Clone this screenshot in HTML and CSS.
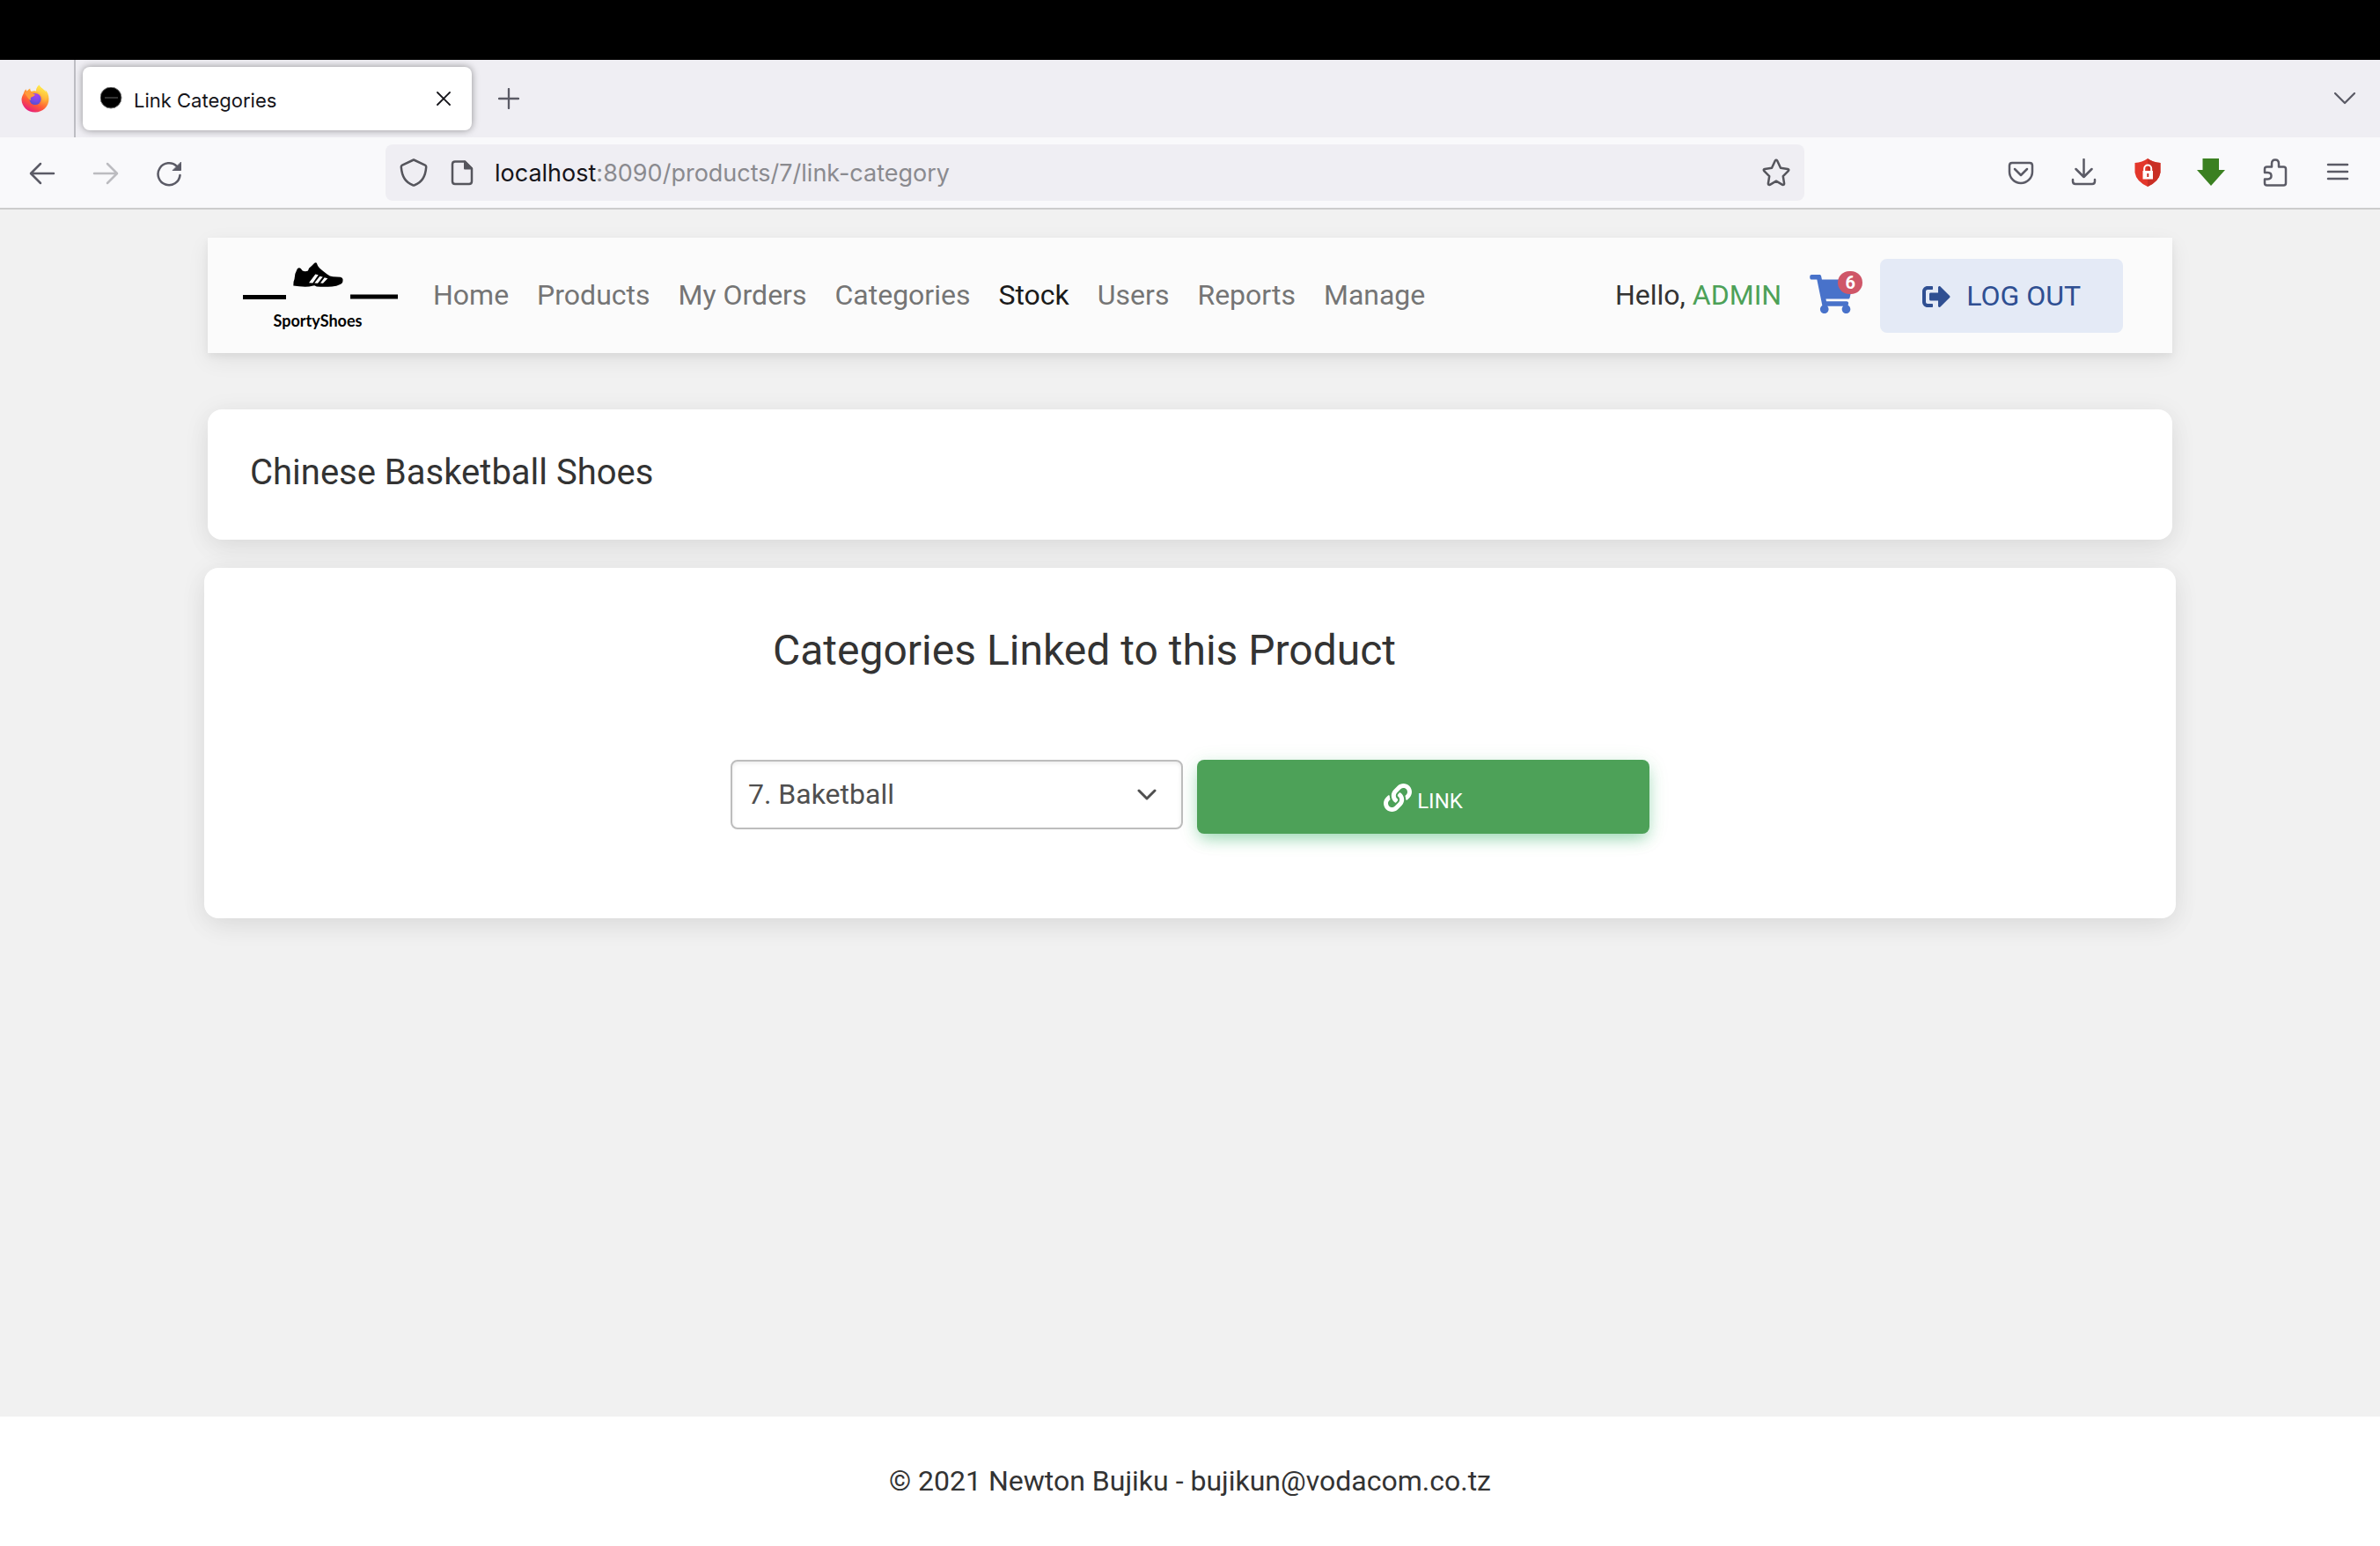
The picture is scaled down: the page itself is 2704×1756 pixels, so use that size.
FILE: index.html
```html
<!DOCTYPE html>
<html lang="en">
<head>
<meta charset="utf-8">
<meta name="viewport" content="width=device-width, initial-scale=1">
<title>Link Categories</title>
<link rel="stylesheet" href="styles.css">
</head>
<body>
<div class="screen-edge"></div>

<header class="browser">
  <div class="tab-strip">
    <button class="pinned" type="button" aria-label="Firefox View">
      <svg width="32" height="32" viewBox="0 0 32 32" aria-hidden="true">
        <defs>
          <linearGradient id="flame" x1="0.8" y1="0.05" x2="0.25" y2="1">
            <stop offset="0" stop-color="#fff44f"/><stop offset="0.35" stop-color="#ffa436"/><stop offset="0.65" stop-color="#ff5b36"/><stop offset="1" stop-color="#e31587"/>
          </linearGradient>
          <linearGradient id="tail" x1="0.6" y1="0" x2="0.4" y2="1">
            <stop offset="0" stop-color="#fff44f"/><stop offset="0.6" stop-color="#ffb339"/><stop offset="1" stop-color="#ff6b36" stop-opacity="0"/>
          </linearGradient>
          <radialGradient id="globe" cx="0.6" cy="0.2" r="0.9">
            <stop offset="0" stop-color="#a541ee"/><stop offset="0.5" stop-color="#7a4be8"/><stop offset="1" stop-color="#4a50c8"/>
          </radialGradient>
        </defs>
        <path fill="url(#flame)" d="M20.500 0.500c-2.500 2-3.500 5-3.200 7.200-2-.8-4-.6-5.500.2-1.200-.8-1.600-2-1.500-3.400-1.400.6-2.600 1.700-3.400 3-.9 0-1.200-1.500-1.200-2.200-1.500 1.200-2.500 3.200-2.900 5C1.500 12.500.5 15.300.5 17.200.8 25.200 7.500 31.500 16 31.500S31.500 25 31.500 16.500c0-4.500-1.600-8.500-4.400-10.400.5 1 .7 1.700.8 2.600C26 5 22 4 20.500.5z"/>
        <path fill="url(#tail)" d="M20.500.5c-2.500 2-3.500 5-3.200 7.200 4.500 1.500 6.700 5.300 6.200 9.300-.4 4-3 7-6.500 8.500 7.500-.5 12.500-5.500 12.500-12 0-3-1-5-1.600-4.800C26 5 22 4 20.500.5z"/>
        <circle cx="16" cy="16.500" r="6.600" fill="url(#globe)"/>
        <path fill="#ff9a3a" d="M3.500 9.500c2-1.500 5-1.800 8-.8 1 .8 1.600 2.400 4.300 2.500-.3 2.300-2.800 2.200-4.300 3.300-1 .8-1 2.200-.2 3.500-3.500-1-4.300-5-7.800-8.500z"/>
      </svg>
    </button>
    <div class="tab">
      <svg class="tab-favicon" width="26" height="26" viewBox="0 0 26 26" aria-hidden="true">
        <circle cx="12" cy="12" r="12" fill="#000" stroke="#777" stroke-width="1"/>
        <path d="M5 12h15" stroke="#333" stroke-width="2"/>
      </svg>
      <span class="tab-title">Link Categories</span>
      <button class="icon-button" type="button" aria-label="Close tab">
        <svg width="16" height="16" viewBox="0 0 16 16" fill="none" stroke="#15141a" stroke-width="1.800" stroke-linecap="round" aria-hidden="true"><path d="M1 1l14 14M15 1L1 15"/></svg>
      </button>
    </div>
    <button class="icon-button new-tab" type="button" aria-label="New tab">
      <svg width="24" height="24" viewBox="0 0 24 24" fill="none" stroke="#5b5b66" stroke-width="2.300" stroke-linecap="round" aria-hidden="true"><path d="M12 1v22M1 12h22"/></svg>
    </button>
    <button class="icon-button all-tabs" type="button" aria-label="List all tabs">
      <svg width="24" height="14" viewBox="0 0 24 14" fill="none" stroke="#5b5b66" stroke-width="2.300" stroke-linecap="round" stroke-linejoin="round" aria-hidden="true"><path d="M1 1l11 11L23 1"/></svg>
    </button>
  </div>

  <div class="toolbar">
    <div class="history">
      <button class="icon-button" type="button" aria-label="Back">
        <svg width="32" height="32" viewBox="0 0 32 32" fill="none" stroke="#5b5b66" stroke-width="2.500" stroke-linecap="round" stroke-linejoin="round" aria-hidden="true"><path d="M29 17H4M14 6L3 17l11 11"/></svg>
      </button>
      <button class="icon-button" type="button" aria-label="Forward" disabled>
        <svg width="32" height="32" viewBox="0 0 32 32" fill="none" stroke="#bcbcc0" stroke-width="2.500" stroke-linecap="round" stroke-linejoin="round" aria-hidden="true"><path d="M3 17h25M18 6l11 11-11 11"/></svg>
      </button>
      <button class="icon-button" type="button" aria-label="Reload">
        <svg width="32" height="32" viewBox="0 0 32 32" fill="none" stroke="#5b5b66" stroke-width="2.500" stroke-linecap="round" aria-hidden="true"><path d="M28.500 19A12.500 12.500 0 1 1 25 9"/><path d="M29.500 4.500v9h-9z" fill="#5b5b66" stroke-width="1" stroke-linejoin="round"/></svg>
      </button>
    </div>
    <div class="address">
      <svg width="32" height="32" viewBox="0 0 32 32" fill="none" stroke="#55555c" stroke-width="2.500" stroke-linejoin="round" aria-hidden="true"><path d="M16 1.500l13 6.200c1 .5 1.300 1 1.200 2C29.500 20 25 27.500 17 30.300q-1 .4-2 0C7 27.500 2.500 20 1.800 9.700c-.1-1 .2-1.500 1.200-2z"/></svg>
      <svg width="26" height="32" viewBox="0 0 26 32" fill="none" stroke="#55555c" stroke-width="2.500" stroke-linejoin="round" aria-hidden="true"><path d="M5 3.500h11l8 8V26q0 3-3 3H5q-3 0-3-3V6.500q0-3 3-3z"/><path d="M16 3.500v8h8z" fill="#55555c" stroke-width="2"/></svg>
      <div class="url" role="textbox" aria-label="Address"><span class="url-host">localhost</span>:8090/products/7/link-category</div>
      <button class="icon-button" type="button" aria-label="Bookmark this page">
        <svg width="32" height="32" viewBox="0 0 32 32" fill="none" stroke="#55555c" stroke-width="2.500" stroke-linejoin="round" aria-hidden="true"><path d="M14.700 2.700q1.300-1.700 2.600 0l3.700 8 8 1.200q2 .5.800 2.200l-6 6.100 1.300 8.200q0 2-2 1.400L16 25.700l-7.100 4.100q-2 .6-2-1.400l1.300-8.200-6-6.100q-1.200-1.700.8-2.200l8-1.200z"/></svg>
      </button>
    </div>
    <div class="actions">
      <button class="icon-button" type="button" aria-label="Save to Pocket">
        <svg width="32" height="32" viewBox="0 0 32 32" fill="none" stroke="#5b5b66" stroke-width="2.500" stroke-linecap="round" stroke-linejoin="round" aria-hidden="true"><path d="M6 5h20q3 0 3 3v7a13 13 0 0 1-26 0V8q0-3 3-3z"/><path d="M9 12l7 7 7-7"/></svg>
      </button>
      <button class="icon-button" type="button" aria-label="Downloads">
        <svg width="32" height="32" viewBox="0 0 32 32" fill="none" stroke="#5b5b66" stroke-width="2.500" stroke-linecap="round" stroke-linejoin="round" aria-hidden="true"><path d="M15.500 1v20M6.500 12l9 9 9-9M3 24v2q0 3 3 3h19q3 0 3-3v-2"/></svg>
      </button>
      <button class="icon-button" type="button" aria-label="Password guard">
        <svg width="32" height="32" viewBox="0 0 32 32" aria-hidden="true">
          <path fill="#e3372b" d="M16 0q6 4.500 14.500 5v11Q29 26 16 32 3 26 1.500 16V5Q10 4.500 16 0z"/><path fill="#c92f25" d="M16 0q6 4.500 14.500 5v11Q29 26 16 32z"/>
          <path fill="#fff" d="M10.500 14h11.500v9.500H10.500z"/><path fill="none" stroke="#fff" stroke-width="2" d="M12.200 14v-2.500a4 4 0 0 1 8 0V14"/><path stroke="#c92f25" stroke-width="2" d="M16.300 17v4"/>
        </svg>
      </button>
      <button class="icon-button" type="button" aria-label="Download helper">
        <svg width="32" height="32" viewBox="0 0 32 32" aria-hidden="true"><path fill="#3b8021" d="M6.500 0H25v13h7L16 31 0 13h6.500z"/></svg>
      </button>
      <button class="icon-button" type="button" aria-label="Extensions">
        <svg width="32" height="32" viewBox="0 0 32 32" fill="none" stroke="#5b5b66" stroke-width="2.500" stroke-linejoin="round" aria-hidden="true"><path d="M5 16v-4q0-2.500 2.500-2.500H13V6q0-4.500 4-4.500T21 6v3.500h5.500Q29 9.500 29 12v16q0 2.500-2.500 2.500h-19Q5 30.500 5 28v-4.500h3.500q4-.3 4-3.800t-4-3.700z"/></svg>
      </button>
      <button class="icon-button" type="button" aria-label="Application menu">
        <svg width="32" height="32" viewBox="0 0 32 32" fill="none" stroke="#5b5b66" stroke-width="2.500" stroke-linecap="round" aria-hidden="true"><path d="M5 7h22M5 15h22M5 23h22"/></svg>
      </button>
    </div>
  </div>
</header>

<nav class="navbar">
  <a class="brand" href="#" aria-label="SportyShoes">
    <svg width="176" height="84" viewBox="0 0 176 84" aria-hidden="true">
      <path d="M0 41h49v5H0zM122 40.500h54v5h-54z"/>
      <path d="M57.300 30.500Q57 26 58.500 23q0-6 3.200-11.500 2-2 4-.5l2 2.500q3 1.500 6.300 0l1-2.700q3-2.500 6.300-6 1.500-1 2.500 0 1 4 3.500 6 4 3.500 8.400 6.700 3 2.500 6.600 2.700 5 0 8.400.6 3.300 1 2.800 3.700.2 3-3 4.500-4 2-9.300 2.500-9 .7-17.400 0l-2.600-1.300-6 1.300q-9 .5-18-1z"/>
      <path fill="#fff" d="M75 27.200l7.300-9.700 3.400.7-6.400 9.300zM81.300 27.500l6-7.700 3.400.7-5.700 7.300zM88 27.500l4.700-6.300 3.600 1-5.300 5.600z"/>
      <text class="brand-text" x="85" y="77" text-anchor="middle">SportyShoes</text>
    </svg>
  </a>
  <ul class="menu">
    <li><a href="#">Home</a></li>
    <li><a href="#">Products</a></li>
    <li><a href="#">My Orders</a></li>
    <li><a href="#">Categories</a></li>
    <li><a class="is-active" href="#">Stock</a></li>
    <li><a href="#">Users</a></li>
    <li><a href="#">Reports</a></li>
    <li><a href="#">Manage</a></li>
  </ul>
  <p class="greeting">Hello, <span class="greeting-name">ADMIN</span></p>
  <a class="cart" href="#" aria-label="Cart">
    <svg width="50" height="44" viewBox="0 0 576 512" fill="#4872ca" aria-hidden="true"><path d="M528.120 301.319l47.273-208C578.806 78.301 567.391 64 551.990 64H159.208l-9.166-44.810C147.758 8.021 137.930 0 126.529 0H24C10.745 0 0 10.745 0 24v16c0 13.255 10.745 24 24 24h69.883l70.248 343.435C147.325 417.100 136 435.222 136 456c0 30.928 25.072 56 56 56s56-25.072 56-56c0-15.674-6.447-29.835-16.824-40h209.647C430.447 426.165 424 440.326 424 456c0 30.928 25.072 56 56 56s56-25.072 56-56c0-22.172-12.888-41.332-31.579-50.405l5.517-24.276c3.413-15.018-8.002-29.319-23.403-29.319H218.117l-6.545-32h293.145c11.206 0 20.920-7.754 23.403-18.681z"/></svg>
    <span class="cart-count">6</span>
  </a>
  <button class="logout" type="button">
    <svg width="32" height="32" viewBox="0 0 512 512" fill="currentColor" aria-hidden="true"><path d="M497 273L329 441c-15 15-41 4.500-41-17v-96H152c-13.300 0-24-10.700-24-24v-96c0-13.300 10.700-24 24-24h136V88c0-21.400 25.900-32 41-17l168 168c9.300 9.400 9.300 24.600 0 34zM192 436v-40c0-6.600-5.400-12-12-12H96c-17.700 0-32-14.300-32-32V160c0-17.700 14.300-32 32-32h84c6.600 0 12-5.400 12-12V76c0-6.600-5.400-12-12-12H96c-53 0-96 43-96 96v192c0 53 43 96 96 96h84c6.600 0 12-5.400 12-12z"/></svg>
    <span>LOG OUT</span>
  </button>
</nav>

<main class="content">
  <section class="card product">
    <h1 class="product-name">Chinese Basketball Shoes</h1>
  </section>
  <section class="card categories">
    <div class="categories-inner">
      <h2 class="categories-title">Categories Linked to this Product</h2>
      <form class="link-form">
        <div class="select">
          <select aria-label="Category">
            <option>7. Baketball</option>
          </select>
          <svg width="22" height="14" viewBox="0 0 22 14" fill="none" stroke="#4f4f4f" stroke-width="3" stroke-linecap="round" stroke-linejoin="round" aria-hidden="true"><path d="M2 2l9 9 9-9"/></svg>
        </div>
        <button class="link-button" type="submit">
          <span class="link-label">
            <svg width="32" height="32" viewBox="0 0 512 512" fill="currentColor" aria-hidden="true"><path d="M326.612 185.391c59.747 59.809 58.927 155.698.36 214.590-.11.12-.24.25-.36.37l-67.200 67.200c-59.270 59.270-155.699 59.262-214.960 0-59.270-59.260-59.270-155.700 0-214.960l37.106-37.106c9.840-9.840 26.786-3.300 27.294 10.606.648 17.722 3.826 35.527 9.690 52.721 1.986 5.822.567 12.262-3.783 16.612l-13.087 13.087c-28.026 28.026-28.905 73.660-1.155 101.960 28.024 28.579 74.086 28.749 102.325.51l67.200-67.190c28.191-28.191 28.073-73.757 0-101.830-3.701-3.694-7.429-6.564-10.341-8.569a16.037 16.037 0 0 1-6.947-12.606c-.396-10.567 3.348-21.456 11.698-29.806l21.054-21.055c5.521-5.521 14.182-6.199 20.584-1.731a152.482 152.482 0 0 1 20.522 17.197zM467.547 44.449c-59.261-59.262-155.690-59.270-214.960 0l-67.200 67.200c-.12.12-.25.25-.36.37-58.566 58.892-59.387 154.781.36 214.590a152.454 152.454 0 0 0 20.521 17.196c6.402 4.468 15.064 3.789 20.584-1.731l21.054-21.055c8.350-8.350 12.094-19.239 11.698-29.806a16.037 16.037 0 0 0-6.947-12.606c-2.912-2.005-6.640-4.875-10.341-8.569-28.073-28.073-28.191-73.639 0-101.830l67.200-67.190c28.239-28.239 74.300-28.069 102.325.51 27.750 28.300 26.872 73.934-1.155 101.960l-13.087 13.087c-4.350 4.350-5.769 10.790-3.783 16.612 5.864 17.194 9.042 34.999 9.690 52.721.509 13.906 17.454 20.446 27.294 10.606l37.106-37.106c59.271-59.259 59.271-155.699.001-214.959z"/></svg>
            LINK
          </span>
        </button>
      </form>
    </div>
  </section>
</main>

<footer class="footer">© 2021 Newton Bujiku - bujikun@vodacom.co.tz</footer>
</body>
</html>
```
FILE: styles.css
```css
*,
*::before,
*::after {
  box-sizing: border-box;
}

body {
  display: flex;
  flex-direction: column;
  min-height: 100vh;
  margin: 0;
  background: #f1f1f1;
  color: #333;
  font-family: Roboto, "Liberation Sans", sans-serif;
  font-size: 32px;
  line-height: 51px;
}

svg {
  display: block;
  flex: none;
}

button {
  font: inherit;
  cursor: pointer;
}

a {
  color: inherit;
  text-decoration: none;
}

h1,
h2,
p,
ul {
  margin: 0;
  padding: 0;
}

/* Browser window */

.screen-edge {
  height: 68px;
  background: #000;
}

.browser {
  font-family: Inter, "Liberation Sans", sans-serif;
  border-bottom: 2px solid #ccc;
}

.icon-button {
  display: flex;
  padding: 0;
  border: 0;
  background: none;
}

.tab-strip {
  display: flex;
  align-items: center;
  height: 88px;
  padding-right: 28px;
  background: #efeef3;
}

.pinned {
  display: flex;
  align-items: center;
  align-self: stretch;
  width: 86px;
  padding: 0 0 0 24px;
  border: 0;
  border-right: 2px solid #bdbdc3;
  background: none;
}

.tab {
  display: flex;
  align-items: center;
  gap: 12px;
  width: 442px;
  height: 72px;
  margin-left: 8px;
  padding: 0 24px 0 20px;
  border-radius: 8px;
  background: #fff;
  box-shadow: 0 0 8px rgba(0, 0, 0, 0.4);
}

.tab-title {
  flex: 1;
  padding-top: 4px;
  color: #15141a;
  font-size: 22px;
  line-height: 32px;
}

.new-tab {
  margin-left: 30px;
}

.all-tabs {
  margin-left: auto;
}

.toolbar {
  display: flex;
  align-items: center;
  height: 80px;
  padding: 0 32px;
  background: #f9f9fb;
}

.history,
.actions {
  display: flex;
  gap: 40px;
}

.address {
  display: flex;
  flex: 1;
  align-items: center;
  height: 64px;
  margin: 0 230px;
  padding: 0 16px;
  border-radius: 8px;
  background: #efeef3;
}

.address svg + svg {
  margin-left: 26px;
}

.url {
  flex: 1;
  margin-left: 24px;
  padding-top: 2px;
  color: #8a8a8f;
  font-size: 27px;
  line-height: 40px;
}

.url-host {
  color: #15141a;
}

/* Site navigation */

.navbar,
.content {
  width: calc(100% - 64px);
  margin: 0 auto;
}

.navbar {
  display: flex;
  align-items: center;
  max-width: 2232px;
  min-height: 131px;
  margin-top: 32px;
  padding: 0 56px 0 40px;
  background: #fbfbfb;
  box-shadow: 0 8px 24px rgba(0, 0, 0, 0.07), 0 4px 8px rgba(0, 0, 0, 0.05);
}

.brand-text {
  font-family: Lato, sans-serif;
  font-size: 18px;
  font-weight: 700;
}

.menu {
  display: flex;
  gap: 32px;
  margin-left: 40px;
  color: #757575;
  list-style: none;
}

.menu .is-active {
  color: #1a1a1a;
}

.greeting {
  margin-left: auto;
}

.greeting-name {
  color: #4da158;
}

.cart {
  position: relative;
  margin: 0 30px 4px 32px;
}

.cart-count {
  position: absolute;
  top: -4px;
  right: -10px;
  width: 28px;
  border-radius: 14px;
  background: #cf5668;
  color: #fff;
  font-size: 20px;
  font-weight: 700;
  line-height: 26px;
  text-align: center;
}

.logout {
  display: flex;
  align-items: center;
  gap: 18px;
  height: 84px;
  padding: 2px 48px 0;
  border: 0;
  border-radius: 8px;
  background: #e4eaf6;
  color: #2f4f92;
}

/* Page content */

.content {
  display: flex;
  flex-direction: column;
  gap: 32px;
  max-width: 2240px;
  padding: 64px 0;
}

.card {
  border-radius: 16px;
  background: #fff;
  box-shadow: 0 4px 30px rgba(0, 0, 0, 0.07), 0 12px 32px rgba(0, 0, 0, 0.04);
}

.product {
  margin: 0 4px;
  padding: 48px;
}

.product-name {
  margin-bottom: 4px;
  font-size: 40px;
  font-weight: 400;
  line-height: 48px;
}

.categories {
  padding: 64px 32px 96px;
}

.categories-inner {
  max-width: 1044px;
  margin: 0 auto;
}

.categories-title {
  margin-bottom: 94px;
  padding-left: 48px;
  font-size: 48px;
  font-weight: 400;
  line-height: 60px;
}

.link-form {
  display: grid;
  grid-template-columns: 1fr 1fr;
  gap: 16px;
  align-items: start;
}

.select {
  display: grid;
  align-items: center;
}

.select > * {
  grid-area: 1 / 1;
}

.select svg {
  justify-self: end;
  margin-right: 30px;
  pointer-events: none;
}

.select select {
  width: 100%;
  height: 79px;
  padding: 0 18px;
  border: 2px solid #bdbdbd;
  border-radius: 8px;
  background: #fff;
  box-shadow: inset 0 2px 4px rgba(0, 0, 0, 0.08);
  color: #4f4f4f;
  font: inherit;
  appearance: none;
}

.link-button {
  display: flex;
  align-items: center;
  justify-content: center;
  height: 84px;
  padding: 2px 32px 0;
  border: 0;
  border-radius: 8px;
  background: #4da158;
  box-shadow: 0 8px 18px -4px rgba(20, 164, 77, 0.4), 0 4px 24px rgba(20, 164, 77, 0.12);
  color: #fff;
}

.link-label {
  display: flex;
  align-items: flex-end;
  gap: 6px;
  font-size: 24px;
  line-height: 24px;
}

.footer {
  margin-top: auto;
  padding: 48px 32px;
  background: #fff;
  text-align: center;
}
```
